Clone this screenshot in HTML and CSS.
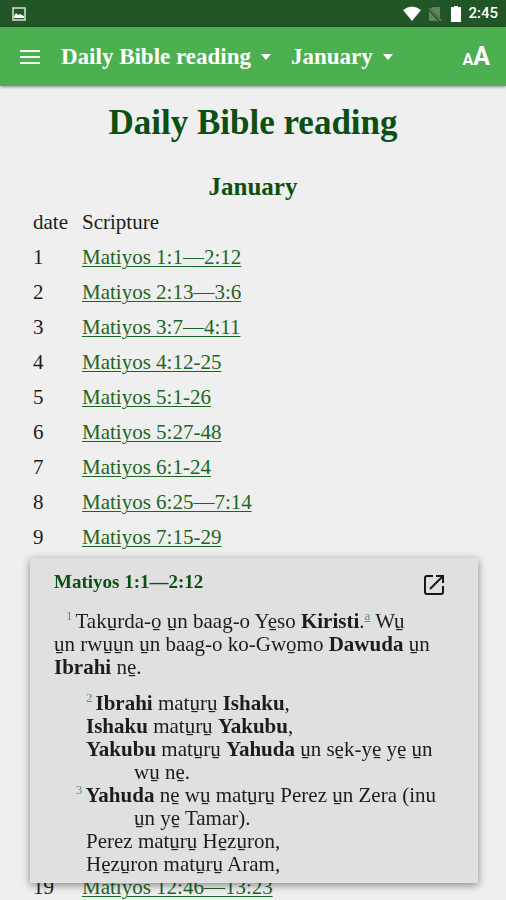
FILE: index.html
```html
<!DOCTYPE html>
<html lang="en">
<head>
<meta charset="utf-8">
<meta name="viewport" content="width=device-width, initial-scale=1">
<title>Daily Bible reading</title>
<link rel="stylesheet" href="styles.css">
</head>
<body>
<div class="status">
  <svg class="status-photo" viewBox="0 0 14 14" width="14" height="14" aria-hidden="true"><rect x="1" y="1" width="12" height="12" fill="none" stroke="#d9e4da" stroke-width="1.5"/><path d="M2 11V9l2-3 2 2 2-1 4 2v2z" fill="#fff"/></svg>
  <div class="status-right">
    <svg viewBox="0 0 20 16" width="20" height="16" aria-hidden="true"><path d="M1 4Q10-3 19 4L10 15z" fill="#fff"/></svg>
    <svg viewBox="0 0 14 16" width="14" height="16" aria-hidden="true"><path d="M5 1h7v11L3 3zM1 5l9 10H1z" fill="#648466"/><path d="M1 2l12 13" stroke="#648466" stroke-width="1.3"/></svg>
    <svg class="battery" viewBox="0 0 12 16" width="12" height="16" aria-hidden="true"><path d="M4 0h4v1h3v15H1V1h3z" fill="#fff"/></svg>
    <span>2:45</span>
  </div>
</div>
<header class="bar">
  <button class="icon-button menu" aria-label="Menu"><svg viewBox="0 0 20 14" width="20" height="14"><path d="M0 1h20M0 7h20M0 13h20" stroke="#eefbee" stroke-width="2"/></svg></button>
  <label class="picker"><select aria-label="Book"><option>Daily Bible reading</option></select><svg viewBox="0 0 12 6" width="12" height="6"><path d="M1 0h10L6 6z" fill="#fff"/></svg></label>
  <label class="picker"><select aria-label="Chapter"><option>January</option></select><svg viewBox="0 0 12 6" width="12" height="6"><path d="M1 0h10L6 6z" fill="#fff"/></svg></label>
  <button class="icon-button text-size" aria-label="Text size"><span class="small-a">A</span><span class="big-a">A</span></button>
</header>
<main class="page">
  <h1>Daily Bible reading</h1>
  <h2>January</h2>
  <table class="plan">
    <thead><tr><th>date</th><th>Scripture</th></tr></thead>
    <tbody>
      <tr><td>1</td><td><a href="#r1">Matiyos 1:1—2:12</a></td></tr>
      <tr><td>2</td><td><a href="#r2">Matiyos 2:13—3:6</a></td></tr>
      <tr><td>3</td><td><a href="#r3">Matiyos 3:7—4:11</a></td></tr>
      <tr><td>4</td><td><a href="#r4">Matiyos 4:12-25</a></td></tr>
      <tr><td>5</td><td><a href="#r5">Matiyos 5:1-26</a></td></tr>
      <tr><td>6</td><td><a href="#r6">Matiyos 5:27-48</a></td></tr>
      <tr><td>7</td><td><a href="#r7">Matiyos 6:1-24</a></td></tr>
      <tr><td>8</td><td><a href="#r8">Matiyos 6:25—7:14</a></td></tr>
      <tr><td>9</td><td><a href="#r9">Matiyos 7:15-29</a></td></tr>
      <tr><td>10</td><td><a href="#r10">Matiyos 8:1-17</a></td></tr>
      <tr><td>11</td><td><a href="#r11">Matiyos 8:18-34</a></td></tr>
      <tr><td>12</td><td><a href="#r12">Matiyos 9:1-17</a></td></tr>
      <tr><td>13</td><td><a href="#r13">Matiyos 9:18-38</a></td></tr>
      <tr><td>14</td><td><a href="#r14">Matiyos 10:1-25</a></td></tr>
      <tr><td>15</td><td><a href="#r15">Matiyos 10:26—11:6</a></td></tr>
      <tr><td>16</td><td><a href="#r16">Matiyos 11:7-30</a></td></tr>
      <tr><td>17</td><td><a href="#r17">Matiyos 12:1-21</a></td></tr>
      <tr><td>18</td><td><a href="#r18">Matiyos 12:22-45</a></td></tr>
      <tr><td>19</td><td><a href="#r19">Matiyos 12:46—13:23</a></td></tr>
    </tbody>
  </table>
</main>
<section class="popup" aria-labelledby="passage">
  <div class="popup-head">
    <h3 id="passage">Matiyos 1:1—2:12</h3>
    <button class="icon-button" aria-label="Open passage"><svg viewBox="0 0 20 20" width="20" height="20" fill="none" stroke="#161616" stroke-width="2"><path d="M9 1H3Q1 1 1 3v14q0 2 2 2h14q2 0 2-2v-6M12 1h7v7M18.500 1.500L6 14"/></svg></button>
  </div>
  <p class="intro"><sup>1</sup>Taku̱rda-o̱ u̱n baag-o Ye̱so <b>Kiristi</b>.<sup><a href="#note">a</a></sup> Wu̱<br>u̱n rwu̱u̱n u̱n baag-o ko-Gwo̱mo <b>Dawuda</b> u̱n<br><b>Ibrahi</b> ne̱.</p>
  <div class="verses">
    <p><sup>2</sup><b>Ibrahi</b> matu̱ru̱ <b>Ishaku</b>,</p>
    <p><b>Ishaku</b> matu̱ru̱ <b>Yakubu</b>,</p>
    <p><b>Yakubu</b> matu̱ru̱ <b>Yahuda</b> u̱n se̱k-ye̱ ye̱ u̱n<br>wu̱ ne̱.</p>
    <p><sup class="hang">3</sup><b>Yahuda</b> ne̱ wu̱ matu̱ru̱ Perez u̱n Zera (inu<br>u̱n ye̱ Tamar).</p>
    <p>Perez matu̱ru̱ He̱zu̱ron,</p>
    <p>He̱zu̱ron matu̱ru̱ Aram,</p>
  </div>
</section>
</body>
</html>
```
FILE: styles.css
```css
* { box-sizing: border-box; }
body {
  margin: 0;
  height: 100vh;
  display: flex;
  flex-direction: column;
  background: #efefef;
  color: #1c1c1c;
  font-family: "Liberation Serif", serif;
  font-size: 21px;
}
h1, h2, h3, p { margin: 0; }
button, select {
  border: 0;
  padding: 0;
  background: none;
  color: inherit;
  font: inherit;
}
svg { display: block; }
.status {
  flex: none;
  height: 27px;
  padding: 0 8px 0 12px;
  display: flex;
  align-items: center;
  justify-content: space-between;
  background: #225626;
  color: #fff;
  font: 500 15px/27px Roboto, sans-serif;
}
.status-right { display: flex; align-items: center; gap: 6px; }
.battery { margin-left: 2px; }
.bar {
  flex: none;
  height: 59px;
  padding: 0 16px 0 20px;
  display: flex;
  align-items: center;
  background: #4caf50;
  color: #fff;
  box-shadow: 0 1px 3px rgba(0, 0, 0, 0.4);
  font-size: 23px;
  font-weight: bold;
  z-index: 1;
}
.menu { margin-right: 21px; }
.picker { display: flex; align-items: center; gap: 9px; margin-right: 19px; }
.picker select { appearance: none; }
.text-size {
  margin-left: auto;
  display: flex;
  align-items: baseline;
  font-family: Roboto, sans-serif;
  font-weight: bold;
}
.small-a { font-size: 16px; }
.big-a { font-size: 25px; }
.page {
  flex: 1;
  min-height: 0;
  padding: 0 32px;
  overflow-y: auto;
  scrollbar-width: none;
}
h1, h2, h3 { color: #0b5012; }
h1 { padding-top: 17px; font-size: 35px; line-height: 40px; text-align: center; }
h2 { padding-top: 28px; font-size: 25px; line-height: 32px; text-align: center; }
.plan { margin-top: 2px; border-collapse: collapse; line-height: 35px; }
.plan th, .plan td { padding: 0 13px 0 1px; font-weight: normal; text-align: left; }
.plan a { color: #1b6624; text-underline-offset: 2px; text-decoration-thickness: 1px; }
.popup {
  position: fixed;
  left: 30px;
  right: 28px;
  bottom: 17px;
  padding: 12px 24px 7px;
  background: #e0e0e0;
  box-shadow: 0 2px 8px rgba(0, 0, 0, 0.45);
  line-height: 23px;
  z-index: 2;
}
.popup-head {
  display: flex;
  align-items: flex-start;
  justify-content: space-between;
  padding-right: 10px;
  height: 28px;
}
.popup-head button { padding-top: 5px; }
h3 { font-size: 19px; }
.intro { margin-top: 12px; text-indent: 12px; }
.verses { margin-top: 13px; padding-left: 80px; }
.verses p { text-indent: -48px; }
sup { color: #4f9d59; font-size: 13px; line-height: 0; margin-right: 3px; }
sup a { color: inherit; }
.intro sup:has(a) { margin-right: 0; }
.hang { margin-left: -10px; }
```
